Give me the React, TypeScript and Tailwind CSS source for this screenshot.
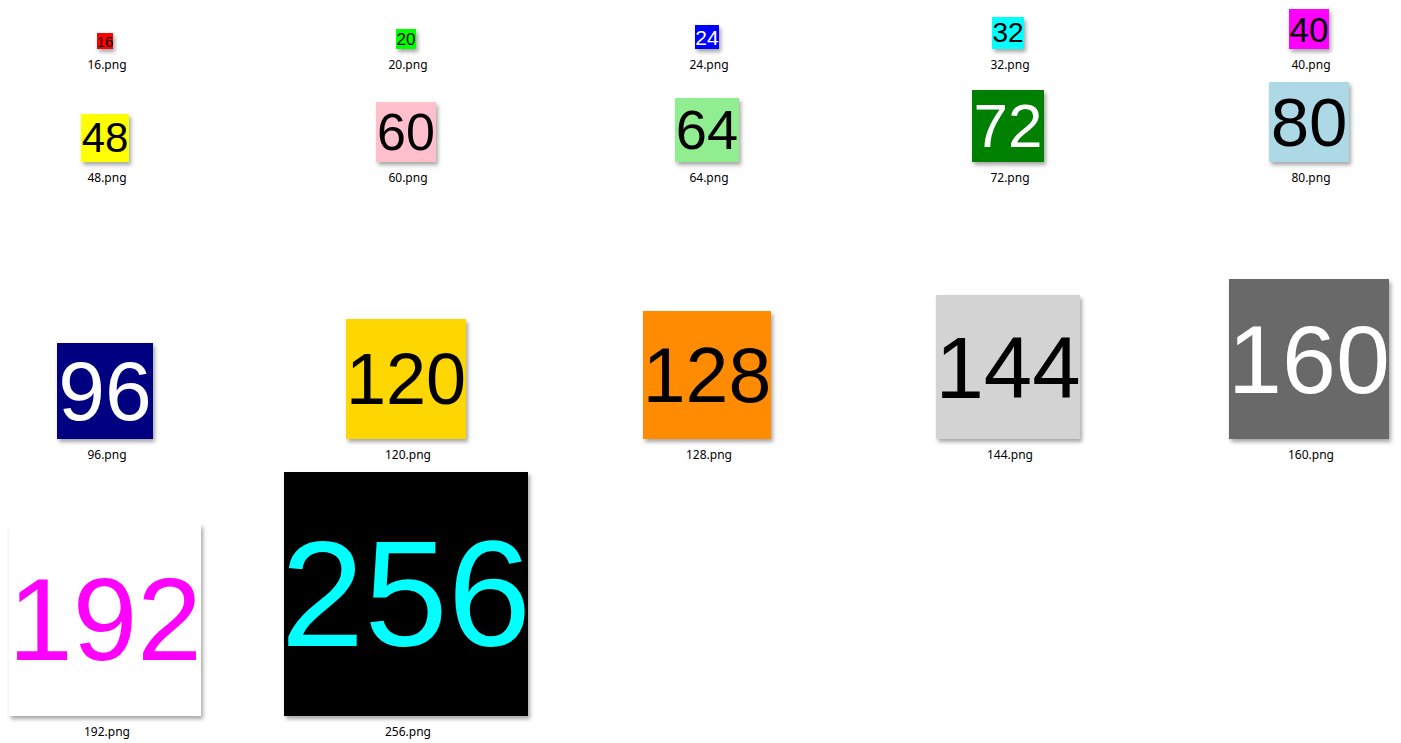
import React from "react";

type Thumb = {
  name: string;
  box: string;
  text: string;
};

// each row: height of the picture area above the labels
const rows: { area: string; items: Thumb[] }[] = [
  {
    area: "h-[49px]",
    items: [
      { name: "16", box: "w-[16px] h-[16px] bg-[#ff0000]", text: "text-[15px] text-black" },
      { name: "20", box: "w-[20px] h-[20px] bg-[#00ff00]", text: "text-[17px] text-black" },
      { name: "24", box: "w-[24px] h-[24px] bg-[#0000ff]", text: "text-[21px] text-white" },
      { name: "32", box: "w-[32px] h-[32px] bg-[#00ffff]", text: "text-[28px] text-black" },
      { name: "40", box: "w-[40px] h-[40px] bg-[#ff00ff]", text: "text-[35px] text-black" },
    ],
  },
  {
    area: "h-[89px]",
    items: [
      { name: "48", box: "w-[48px] h-[48px] bg-[#ffff00]", text: "text-[42px] text-black" },
      { name: "60", box: "w-[60px] h-[60px] bg-[#ffc0cb]", text: "text-[52px] text-black" },
      { name: "64", box: "w-[64px] h-[64px] bg-[#90ee90]", text: "text-[56px] text-black" },
      { name: "72", box: "w-[72px] h-[72px] bg-[#008000]", text: "text-[62px] text-white" },
      { name: "80", box: "w-[80px] h-[80px] bg-[#add8e6]", text: "text-[69px] text-black" },
    ],
  },
  {
    area: "h-[253px]",
    items: [
      { name: "96", box: "w-[96px] h-[96px] bg-[#000080]", text: "text-[84px] text-white" },
      { name: "120", box: "w-[120px] h-[120px] bg-[#ffd700]", text: "text-[72px] text-black" },
      { name: "128", box: "w-[128px] h-[128px] bg-[#ff8c00]", text: "text-[77px] text-black" },
      { name: "144", box: "w-[144px] h-[144px] bg-[#d3d3d3]", text: "text-[87px] text-black" },
      { name: "160", box: "w-[160px] h-[160px] bg-[#696969]", text: "text-[97px] text-white" },
    ],
  },
  {
    area: "h-[253px]",
    items: [
      { name: "192", box: "w-[192px] h-[192px] bg-white", text: "text-[116px] text-[#ff00ff]" },
      { name: "256", box: "w-[244px] h-[244px] bg-black", text: "text-[150px] text-[#00ffff]" },
    ],
  },
];

const Tile = ({ item, area }: { item: Thumb; area: string }) => {
  return (
    <div className="flex flex-col items-center">
      <div className={`${area} flex items-end justify-center pr-1`}>
        <div
          className={`${item.box} flex items-center justify-center overflow-hidden shadow-[2px_3px_4px_rgba(0,0,0,0.35)]`}
        >
          <span
            className={`${item.text} leading-none whitespace-nowrap font-['Liberation_Sans',Arial,sans-serif]`}
          >
            {item.name}
          </span>
        </div>
      </div>
      <div className="mt-2 text-[12px] leading-4 text-black font-['Segoe_UI','Noto_Sans',sans-serif]">
        {item.name}.png
      </div>
    </div>
  );
};

export default function App() {
  return (
    <div className="w-[1401px] h-[743px] overflow-hidden bg-white">
      {rows.map((row, i) => (
        <div key={i} className="grid grid-cols-[repeat(5,214px)] gap-x-[87px]">
          {row.items.map((item) => (
            <Tile key={item.name} item={item} area={row.area} />
          ))}
        </div>
      ))}
    </div>
  );
}
